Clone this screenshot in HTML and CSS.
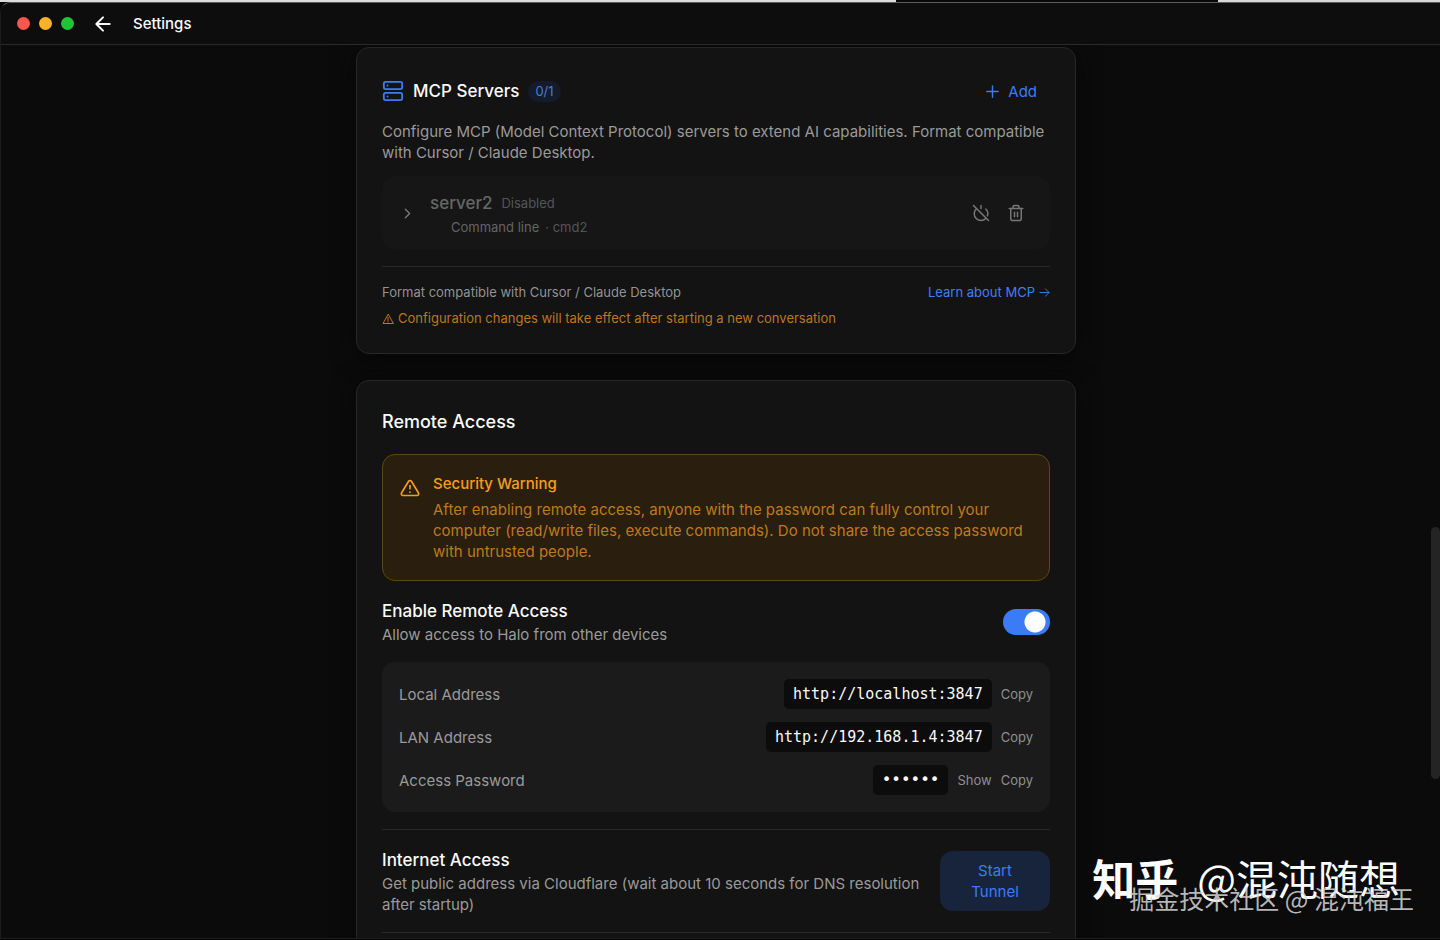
FILE: index.html
```html
<!DOCTYPE html>
<html lang="en">
<head>
<meta charset="utf-8">
<title>Settings</title>
<link rel="stylesheet" href="styles.css">
</head>
<body>
<div class="desktop-strip"></div>
<div class="window">
  <header class="titlebar">
    <div class="lights"><span class="light red"></span><span class="light yellow"></span><span class="light green"></span></div>
    <button class="back" aria-label="Back"><svg class="icon" width="20" height="20" viewBox="0 0 24 24"><path d="M12 20l-8-8 8-8M4 12h16"/></svg></button>
    <h1 class="page-title">Settings</h1>
  </header>
  <main class="content">
    <section class="card">
      <div class="row">
        <div class="heading">
          <svg class="icon blue" width="22" height="22" viewBox="0 0 24 24"><rect x="2" y="2" width="20" height="8" rx="2"/><rect x="2" y="14" width="20" height="8" rx="2"/><path d="M6 6h.01M6 18h.01"/></svg>
          <h2 class="card-title">MCP Servers</h2>
          <span class="badge">0/1</span>
        </div>
        <button class="add"><svg class="icon" width="17" height="17" viewBox="0 0 24 24"><path d="M4 12h16M12 4v16"/></svg>Add</button>
      </div>
      <p class="text intro">Configure MCP (Model Context Protocol) servers to extend AI capabilities. Format compatible with Cursor / Claude Desktop.</p>
      <div class="server">
        <button class="icon-button" aria-label="Expand"><svg class="icon" width="17" height="17" viewBox="0 0 24 24"><path d="M9 18l6-6-6-6"/></svg></button>
        <div class="server-info">
          <div class="server-line"><span class="server-name">server2</span><span class="small">Disabled</span></div>
          <div class="server-meta small"><span class="kind">Command line</span><span>· cmd2</span></div>
        </div>
        <div class="server-actions">
          <button class="icon-button" aria-label="Enable server"><svg class="icon" width="18" height="18" viewBox="0 0 24 24"><path d="M18.4 6.6a9 9 0 0 1 2.1 9.2M12 2v4M2 2l20 20M5.6 6.6a9 9 0 0 0 12.8 12.8"/></svg></button>
          <button class="icon-button" aria-label="Delete server"><svg class="icon" width="18" height="18" viewBox="0 0 24 24"><path d="M3 6h18M19 6v14a2 2 0 0 1-2 2H7a2 2 0 0 1-2-2V6M8 6V4a2 2 0 0 1 2-2h4a2 2 0 0 1 2 2v2M10 11v6M14 11v6"/></svg></button>
        </div>
      </div>
      <footer class="card-footer">
        <div class="row small"><span class="muted">Format compatible with Cursor / Claude Desktop</span><a class="link" href="#mcp">Learn about MCP <svg class="icon" width="11" height="11" viewBox="0 0 24 24"><path d="M2 12h20M14 4l8 8-8 8"/></svg></a></div>
        <p class="notice small"><svg class="icon" width="12" height="12" viewBox="0 0 24 24"><path d="M12 3L2 21h20zM12 9v6M12 17.500v1"/></svg>Configuration changes will take effect after starting a new conversation</p>
      </footer>
    </section>

    <section class="card">
      <h2 class="section-title">Remote Access</h2>
      <div class="alert">
        <svg class="icon alert-icon" width="20" height="20" viewBox="0 0 24 24"><path d="M10.300 3.900L1.800 18a2 2 0 0 0 1.700 3h17a2 2 0 0 0 1.700-3L13.700 3.900a2 2 0 0 0-3.400 0zM12 9v4M12 17h.01"/></svg>
        <div class="alert-body">
          <h3 class="alert-title">Security Warning</h3>
          <p class="alert-text">After enabling remote access, anyone with the password can fully control your computer (read/write files, execute commands). Do not share the access password with untrusted people.</p>
        </div>
      </div>
      <div class="row setting">
        <div><label class="setting-title" for="remote">Enable Remote Access</label><p class="text">Allow access to Halo from other devices</p></div>
        <input class="toggle" id="remote" type="checkbox" role="switch" checked>
      </div>
      <div class="panel">
        <div class="row"><span class="text">Local Address</span><div class="values"><code class="code">http://localhost:3847</code><button class="copy">Copy</button></div></div>
        <div class="row"><span class="text">LAN Address</span><div class="values"><code class="code">http://192.168.1.4:3847</code><button class="copy">Copy</button></div></div>
        <div class="row"><span class="text">Access Password</span><div class="values"><code class="code dots">••••••</code><button class="copy">Show</button><button class="copy">Copy</button></div></div>
      </div>
      <div class="row tunnel">
        <div><h3 class="setting-title">Internet Access</h3><p class="text">Get public address via Cloudflare (wait about 10 seconds for DNS resolution after startup)</p></div>
        <button class="start">Start Tunnel</button>
      </div>
      <div class="divider"></div>
    </section>
  </main>
  <div class="scroll-thumb"></div>
</div>
<div class="mark mark-large"><span class="brand">知乎</span><span>@混沌随想</span></div>
<div class="mark mark-small">掘金技术社区 @ 混沌福王</div>
</body>
</html>
```
FILE: styles.css
```css
* { box-sizing: border-box; }
h1, h2, h3, p { margin: 0; font-weight: 500; }
button { border: 0; padding: 0; background: none; color: inherit; font: inherit; }
body {
  margin: 0;
  height: 100vh;
  display: flex;
  flex-direction: column;
  overflow: hidden;
  background: #050505;
  color: #fafafa;
  font: 15px/21px Inter, "Noto Sans CJK SC", sans-serif;
}
.icon { display: block; flex: none; fill: none; stroke: currentColor; stroke-width: 2; stroke-linecap: round; stroke-linejoin: round; }
.desktop-strip { height: 2px; flex: none; background: linear-gradient(90deg, #dcdcdc 62.2%, #080808 62.2% 84.600%, #d8d8d8 84.600%); }
.window {
  position: relative;
  flex: 1;
  min-height: 0;
  margin-bottom: 1px;
  display: flex;
  flex-direction: column;
  background: #0b0b0b;
  border: 1px solid #1c1c1c;
  border-top-color: #5c5c5c;
  border-right: 0;
  border-top-left-radius: 10px;
}
.titlebar { flex: none; height: 42px; padding-left: 16px; display: flex; align-items: center; border-bottom: 1px solid #2a2a2a; background: #0d0d0d; border-top-left-radius: 10px; }
.lights { display: flex; gap: 9px; }
.light { width: 13px; height: 13px; border-radius: 50%; }
.red { background: #fb5650; }
.yellow { background: #fcb227; }
.green { background: #23c336; }
.back { margin: 0 20px 0 19px; }
.back .icon { stroke-width: 2.4; }
.page-title { font-size: 15px; }
.content { flex: 1; min-height: 0; overflow: hidden; padding: 2px 9px 0 0; display: flex; flex-direction: column; align-items: center; gap: 26px; }
.card { flex: none; width: 100%; max-width: 720px; padding: 26px 25px; background: #131313; border: 1px solid #272727; border-radius: 13px; box-shadow: 0 4px 24px #070707; }
.row { display: flex; align-items: center; justify-content: space-between; }
.heading { display: flex; align-items: center; gap: 9px; }
.blue { color: #3b7cf6; }
.card-title { font-size: 17px; line-height: 26px; }
.badge { padding: 2px 7px; border-radius: 11px; background: #141b2a; color: #477bdd; font-size: 13px; line-height: 17px; }
.add { display: flex; align-items: center; gap: 7px; height: 34px; padding: 0 13px; color: #3b7cf6; }
.text { color: #9a9a9a; font-weight: 400; }
.intro { margin-top: 13px; }
.small { font-size: 13px; line-height: 17px; font-weight: 400; }
.muted { color: #929292; }
.server { margin-top: 13px; padding: 14px 17px 13px; display: flex; align-items: center; background: #161616; border-radius: 13px; color: #555; }
.icon-button { color: #777; }
.icon-button + .icon-button { margin-left: 17px; }
.server-info { flex: 1; margin-left: 14px; }
.server-line { display: flex; align-items: center; gap: 9px; }
.server-name { font-size: 17px; line-height: 26px; color: #666; font-weight: 500; }
.server-meta { margin: 3px 0 0 21px; display: flex; gap: 6px; }
.kind { color: #646464; }
.server-actions { display: flex; padding-right: 8px; }
.card-footer { margin-top: 17px; padding-top: 17px; border-top: 1px solid #292929; }
.link { display: flex; align-items: center; gap: 4px; color: #417ff5; text-decoration: none; }
.notice { margin-top: 9px; display: flex; align-items: center; gap: 4px; color: #b9781b; }
.section-title { font-size: 18px; line-height: 30px; }
.alert { margin-top: 17px; padding: 18px 17px; display: flex; gap: 13px; border: 1px solid #624516; border-radius: 13px; background: #2a1e0f; color: #f59e1b; }
.alert-icon { margin-top: 5px; }
.alert-title { font-size: 15px; }
.alert-text { margin-top: 5px; font-weight: 400; color: #bd7a1c; }
.setting { margin-top: 17px; }
.setting-title { display: block; font-size: 17px; line-height: 26px; font-weight: 500; }
.toggle { appearance: none; flex: none; margin: 0; width: 47px; height: 26px; border-radius: 13px; background: radial-gradient(circle at 32px 13px, #fff 10px, #3b7cf6 11px); }
.panel { margin-top: 17px; padding: 17px; display: grid; gap: 13px; border-radius: 13px; background: #1b1b1b; }
.values { display: flex; align-items: center; gap: 9px; }
.code { padding: 0 9px; border-radius: 5px; background: #0c0c0c; font: 15px/30px "DejaVu Sans Mono", monospace; }
.dots { font-size: 16px; }
.copy { color: #8f8f8f; font-size: 13px; }
.tunnel { gap: 17px; margin-top: 17px; padding: 17px 0; border-top: 1px solid #292929; }
.start { flex: none; width: 110px; padding: 9px 30px; border-radius: 13px; background: #18243c; color: #3b7cf6; }
.divider { height: 1px; background: #292929; }
.scroll-thumb { position: absolute; right: 0; top: 56%; height: 27%; width: 9px; border-radius: 5px; background: #242424; }
.mark { position: absolute; white-space: nowrap; font-family: "Noto Sans CJK SC", sans-serif; }
.mark-large { right: 40px; bottom: 38px; display: flex; gap: 19px; font-size: 41px; line-height: 50px; color: #fff; }
.brand { font-size: 43px; font-weight: 700; }
.mark-small { right: 26px; bottom: 26px; font-size: 25px; line-height: 32px; color: rgba(215, 215, 215, .85); }
```
